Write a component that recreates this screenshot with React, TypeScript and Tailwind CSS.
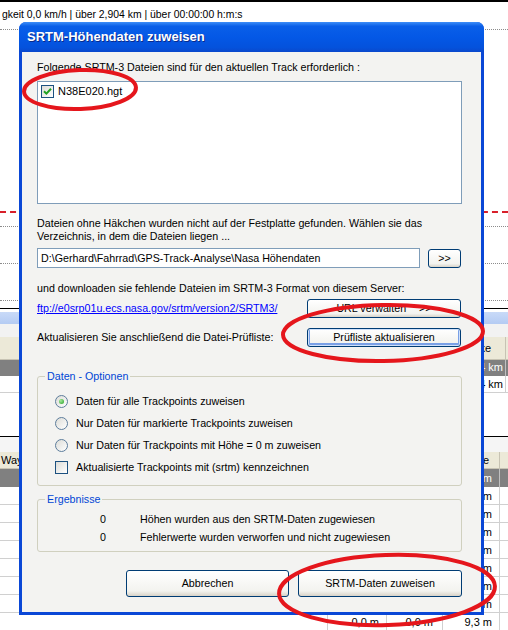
import React from "react";

const lowerRows = ["12,4 m", "10,9 m", "11,6 m", "10,5 m", "9,8 m", "10,3 m", "9,5 m"];

function XpCheck({ checked }: { checked?: boolean }) {
  return (
    <span className="w-[13px] h-[13px] shrink-0 border border-[#1c5180] bg-[linear-gradient(135deg,#dcdcd7,#ffffff)] flex items-center justify-center">
      {checked && (
        <svg width="9" height="9" viewBox="0 0 9 9">
          <path d="M1 4.2 L3.4 6.6 L8 1.8" fill="none" stroke="#21a121" strokeWidth="2" />
        </svg>
      )}
    </span>
  );
}

function XpRadio({ checked }: { checked?: boolean }) {
  return (
    <span className="w-[13px] h-[13px] shrink-0 rounded-full border border-[#5d7d9c] bg-[linear-gradient(135deg,#dcdcd7,#ffffff)] flex items-center justify-center">
      {checked && (
        <span className="w-[5px] h-[5px] rounded-full bg-[radial-gradient(circle_at_35%_35%,#a6e89d,#21a121)]" />
      )}
    </span>
  );
}

function XpButton({
  children,
  className,
  isDefault,
}: {
  children: React.ReactNode;
  className?: string;
  isDefault?: boolean;
}) {
  return (
    <button
      className={
        "shrink-0 rounded-[3px] border border-[#003c74] bg-[linear-gradient(to_bottom,#ffffff,#f3f3ef_80%,#d8d3c8)] text-[10.7px] leading-[13px] text-black flex items-center justify-center " +
        (isDefault
          ? "shadow-[inset_0_0_0_1px_#cee0fa,inset_0_-1px_0_2px_#7aa0e6] "
          : "") +
        (className ?? "")
      }
    >
      {children}
    </button>
  );
}

export default function App() {
  return (
    <div className="relative w-[508px] h-[630px] overflow-hidden bg-white font-['Liberation_Sans',Arial,sans-serif] text-[11px] leading-[13px] text-black">
      {/* background application */}
      <div className="h-[2px] bg-black" />
      <div className="h-[27px] pl-[2px] pt-[6px] whitespace-nowrap text-[10.4px]">
        gkeit 0,0 km/h | über 2,904 km | über 00:00:00 h:m:s
      </div>
      <div className="border-t border-dotted border-[#8c8c8c]" />
      <div className="h-[278px] flex flex-col">
        <div className="h-[181px]" />
        <div className="h-[2px] border-t-2 border-dashed border-[#d8202a]" />
        <div className="h-[13px]" />
        <div className="border-t border-dotted border-[#8c8c8c]" />
        <div className="h-[36px]" />
        <div className="border-t border-dotted border-[#8c8c8c]" />
        <div className="h-[36px]" />
        <div className="border-t border-dotted border-[#8c8c8c]" />
        <div className="h-[7px]" />
      </div>
      <div className="h-px bg-black" />
      <div className="h-[3px]" />
      <div className="h-[12px] bg-[linear-gradient(to_bottom,#c9daf8,#b4cbf3)]" />
      <div className="h-[13px] bg-[#f2f2f2]" />
      <div className="h-[23px] flex bg-[#ece9d8] border-b border-[#c7c3b3]">
        <div className="flex-1 text-right pr-[14px] pt-[5px] border-r border-[#c7c3b3]">Strecke</div>
        <div className="w-[2px]" />
      </div>
      <div className="h-[16px] flex bg-[#808080] text-white">
        <div className="flex-1 text-right pr-[2px] pt-[1px] border-r border-[#c0c0c0]">2,904 km</div>
        <div className="w-[2px]" />
      </div>
      <div className="h-[17px] flex border-b border-[#d0d0d0]">
        <div className="flex-1 text-right pr-[2px] pt-[2px] border-r border-[#d0d0d0]">2,904 km</div>
        <div className="w-[2px]" />
      </div>
      <div className="h-[43px]" />
      <div className="h-px bg-black" />
      <div className="h-[15px] bg-[#f5f5f5]" />
      <div className="h-[17px] flex bg-[#ece9d8] border-b border-[#c7c3b3]">
        <div className="w-[328px] pl-[1px] pt-[2px] border-r border-[#c7c3b3]">Waypoint</div>
        <div className="w-[59px] border-r border-[#c7c3b3]" />
        <div className="w-[56px] border-r border-[#c7c3b3]" />
        <div className="w-[57px] text-right pr-[10px] pt-[2px] border-r border-[#c7c3b3]">Höhe</div>
        <div className="flex-1" />
      </div>
      <div className="h-[18px] flex bg-[#808080] text-white">
        <div className="w-[328px] border-r border-[#c0c0c0]" />
        <div className="w-[59px] border-r border-[#c0c0c0]" />
        <div className="w-[56px] border-r border-[#c0c0c0]" />
        <div className="w-[57px] text-right pr-[7px] pt-[3px] border-r border-[#c0c0c0]">12,6 m</div>
        <div className="flex-1" />
      </div>
      {lowerRows.map((v, i) => (
        <div key={i} className="h-[18px] flex border-b border-[#d0d0d0]">
          <div className="w-[328px] border-r border-[#d0d0d0]" />
          <div className="w-[59px] border-r border-[#d0d0d0]" />
          <div className="w-[56px] border-r border-[#d0d0d0]" />
          <div className="w-[57px] text-right pr-[7px] pt-[3px] border-r border-[#d0d0d0]">{v}</div>
          <div className="flex-1" />
        </div>
      ))}
      <div className="h-[18px] flex border-b border-[#d0d0d0]">
        <div className="w-[328px] border-r border-[#d0d0d0]" />
        <div className="w-[59px] text-right pr-[7px] pt-[3px] border-r border-[#d0d0d0]">0,0 m</div>
        <div className="w-[56px] text-right pr-[9px] pt-[3px] border-r border-[#d0d0d0]">0,0 m</div>
        <div className="w-[57px] text-right pr-[7px] pt-[3px] border-r border-[#d0d0d0]">9,3 m</div>
        <div className="flex-1" />
      </div>

      {/* dialog window */}
      <div className="absolute left-[19px] top-[22px] w-[465px] h-[593px] rounded-t-[7px] bg-[#0a47d6] flex flex-col">
        <div className="h-[30px] shrink-0 rounded-t-[7px] bg-[linear-gradient(to_bottom,#3d8ef8_0%,#0a5fe8_14%,#0458e6_50%,#0452dc_85%,#0a48cc_100%)] flex items-center pl-[8px] pb-[1px] text-white font-bold text-[13px] [text-shadow:1px_1px_0_#0a2a8a]">
          SRTM-Höhendaten zuweisen
        </div>
        <div className="flex-1 mx-[3px] mb-[3px] bg-[#f3f3f1] flex flex-col pl-[15px] pr-[19px] text-[10.7px]">
          <p className="mt-[9px] whitespace-nowrap">
            Folgende SRTM-3 Dateien sind für den aktuellen Track erforderlich :
          </p>
          <div className="mt-[7px] h-[123px] border border-[#7f9db9] bg-white pl-[3px] pt-[3px]">
            <div className="flex items-center gap-[4px] text-[11px]">
              <XpCheck checked />
              <span>N38E020.hgt</span>
            </div>
          </div>
          <p className="mt-[13px] whitespace-nowrap">
            Dateien ohne Häkchen wurden nicht auf der Festplatte gefunden. Wählen sie das
            <br />
            Verzeichnis, in dem die Dateien liegen ...
          </p>
          <div className="mt-[5px] h-[20px] flex items-center">
            <div className="w-[383px] h-[20px] border border-[#7f9db9] bg-white pl-[3px] flex items-center whitespace-nowrap">
              {"D:\\Gerhard\\Fahrrad\\GPS-Track-Analyse\\Nasa Höhendaten"}
            </div>
            <XpButton className="ml-auto mr-[1px] w-[33px] h-[19px]">&gt;&gt;</XpButton>
          </div>
          <p className="mt-[14px] whitespace-nowrap">
            und downloaden sie fehlende Dateien im SRTM-3 Format von diesem Server:
          </p>
          <div className="mt-[4px] h-[19px] flex items-center justify-between">
            <a className="text-[#0000ff] underline whitespace-nowrap">
              ftp://e0srp01u.ecs.nasa.gov/srtm/version2/SRTM3/
            </a>
            <XpButton className="mr-[1px] w-[154px] h-[19px] gap-[13px]">
              <span>URL verwalten</span>
              <span>&gt;&gt;</span>
            </XpButton>
          </div>
          <div className="mt-[10px] h-[19px] flex items-center justify-between">
            <span className="whitespace-nowrap">Aktualisieren Sie anschließend die Datei-Prüfliste:</span>
            <XpButton isDefault className="mr-[1px] w-[154px] h-[19px]">
              Prüfliste aktualisieren
            </XpButton>
          </div>
          <fieldset className="mt-[23px] rounded-[3px] border border-[#d0d0bf] pl-[17px] pt-[7px] pb-[7px]">
            <legend className="ml-[-10px] px-[2px] text-[#0046d5]">Daten - Optionen</legend>
            <div className="h-[22px] flex items-center gap-[8px]">
              <XpRadio checked />
              <span>Daten für alle Trackpoints zuweisen</span>
            </div>
            <div className="h-[22px] flex items-center gap-[8px]">
              <XpRadio />
              <span>Nur Daten für markierte Trackpoints zuweisen</span>
            </div>
            <div className="h-[22px] flex items-center gap-[8px]">
              <XpRadio />
              <span>Nur Daten für Trackpoints mit Höhe = 0 m zuweisen</span>
            </div>
            <div className="h-[22px] flex items-center gap-[8px]">
              <XpCheck />
              <span>Aktualisierte Trackpoints mit (srtm) kennzeichnen</span>
            </div>
          </fieldset>
          <fieldset className="mt-[7px] rounded-[3px] border border-[#d0d0bf] pt-[4px] pb-[5px]">
            <legend className="ml-[7px] px-[2px] text-[#0046d5]">Ergebnisse</legend>
            <div className="h-[18px] flex items-center">
              <span className="w-[68px] text-right">0</span>
              <span className="ml-[34px]">Höhen wurden aus den SRTM-Daten zugewiesen</span>
            </div>
            <div className="h-[18px] flex items-center">
              <span className="w-[68px] text-right">0</span>
              <span className="ml-[34px]">Fehlerwerte wurden verworfen und nicht zugewiesen</span>
            </div>
          </fieldset>
          <div className="mt-[18px] flex justify-end gap-[9px]">
            <XpButton className="w-[163px] h-[27px]">Abbrechen</XpButton>
            <XpButton className="w-[164px] h-[27px]">SRTM-Daten zuweisen</XpButton>
          </div>
        </div>
      </div>

      {/* red annotation ellipses */}
      <svg className="absolute left-0 top-0 pointer-events-none" width="508" height="630" viewBox="0 0 508 630">
        <g fill="none" stroke="#e5161c" strokeWidth="4">
          <ellipse cx="80" cy="89.5" rx="56" ry="19.5" transform="rotate(-2 80 89.5)" />
          <ellipse cx="383" cy="333" rx="100" ry="28" transform="rotate(-1 383 333)" />
          <ellipse cx="387" cy="590" rx="108" ry="35" transform="rotate(-2 387 590)" />
        </g>
      </svg>
    </div>
  );
}
